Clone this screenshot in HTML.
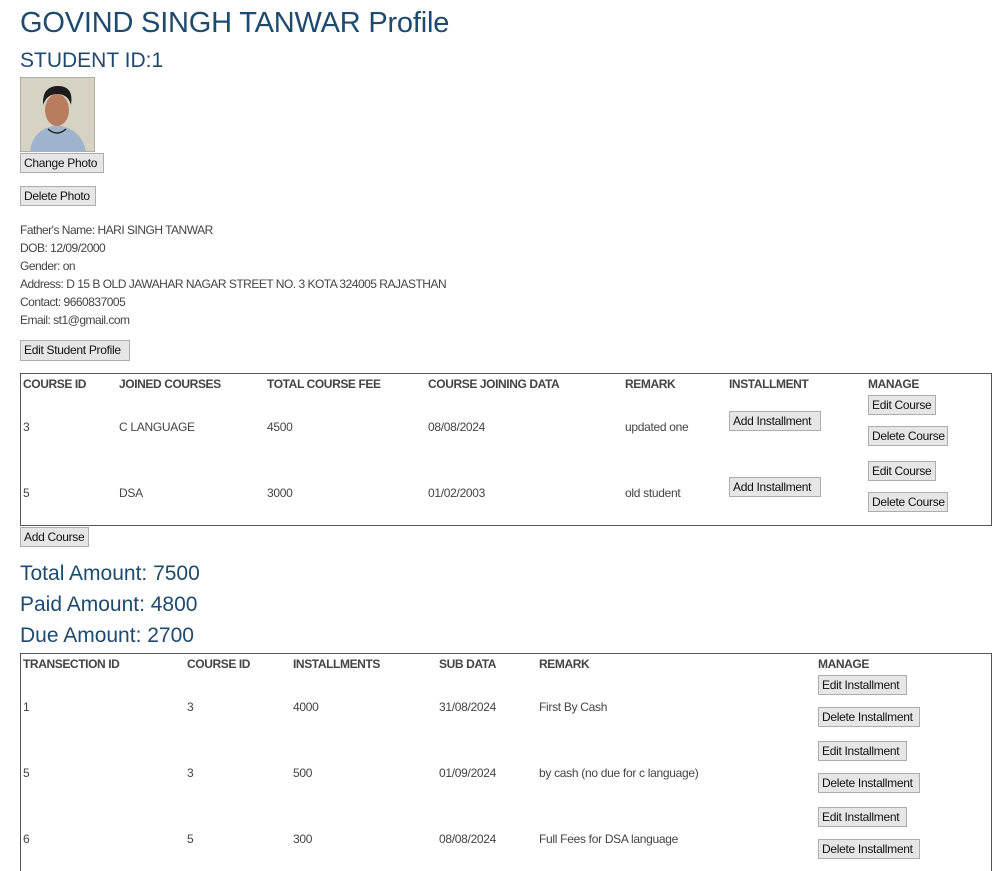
<!DOCTYPE html>
<html><head><meta charset="utf-8"><style>
html,body{margin:0;width:1002px;height:871px;overflow:hidden}
body{background:#fff;font-family:"Liberation Sans",sans-serif;color:#333;position:relative}
.a{position:absolute;white-space:nowrap}
.h{color:#1e4a6e}
.b{position:absolute;background:#e6e6e6;border:1px solid #adadad;box-sizing:border-box;font-size:12px;color:#111;height:20px;line-height:18px;padding:0 3px;white-space:nowrap;letter-spacing:-0.3px}
.t{font-size:12px;color:#444;letter-spacing:-0.3px}
.th{font-size:12px;font-weight:bold;color:#444;letter-spacing:-0.4px}
.box{position:absolute;border:1px solid #555;box-sizing:border-box}
</style></head><body>
<div class="a h" style="left:20px;top:7px;font-size:29px;letter-spacing:-0.2px">GOVIND SINGH TANWAR Profile</div>
<div class="a h" style="left:20px;top:49px;font-size:21px">STUDENT ID:1</div>
<svg class="a" style="left:20px;top:77px" width="75" height="75" viewBox="0 0 75 75">
<rect x="0" y="0" width="75" height="75" fill="#d6d3c4" stroke="#888"/>
<path d="M10 75 Q12 52 37 48 Q62 52 66 75Z" fill="#9fb4cc"/>
<ellipse cx="37" cy="33" rx="12" ry="16" fill="#b87c5e"/>
<path d="M23 28 Q22 9 38 9 Q54 9 51 28 Q48 17 37 17 Q27 17 23 28Z" fill="#1c1a1a"/>
<path d="M28 52 Q37 60 46 52" stroke="#222" fill="none" stroke-width="1.5"/>
</svg>
<div class="b" style="left:20px;top:153px;width:84px">Change Photo</div>
<div class="b" style="left:20px;top:186px;width:76px">Delete Photo</div>
<div class="a t" style="left:20px;top:221px;line-height:18px;font-size:12px;letter-spacing:-0.5px">Father's Name: HARI SINGH TANWAR<br>DOB: 12/09/2000<br>Gender: on<br>Address: D 15 B OLD JAWAHAR NAGAR STREET NO. 3 KOTA 324005 RAJASTHAN<br>Contact: 9660837005<br>Email: st1@gmail.com</div>
<div class="b" style="left:20px;top:340px;width:110px;height:21px">Edit Student Profile</div>

<div class="box" style="left:20px;top:373px;width:972px;height:153px"></div>
<div class="a th" style="left:23px;top:377px">COURSE ID</div>
<div class="a th" style="left:119px;top:377px">JOINED COURSES</div>
<div class="a th" style="left:267px;top:377px">TOTAL COURSE FEE</div>
<div class="a th" style="left:428px;top:377px">COURSE JOINING DATA</div>
<div class="a th" style="left:625px;top:377px">REMARK</div>
<div class="a th" style="left:729px;top:377px">INSTALLMENT</div>
<div class="a th" style="left:868px;top:377px">MANAGE</div>

<div class="a t" style="left:23px;top:420px">3</div>
<div class="a t" style="left:119px;top:420px">C LANGUAGE</div>
<div class="a t" style="left:267px;top:420px">4500</div>
<div class="a t" style="left:428px;top:420px">08/08/2024</div>
<div class="a t" style="left:625px;top:420px">updated one</div>
<div class="b" style="left:729px;top:411px;width:92px">Add Installment</div>
<div class="b" style="left:868px;top:395px;width:68px">Edit Course</div>
<div class="b" style="left:868px;top:426px;width:80px">Delete Course</div>

<div class="a t" style="left:23px;top:486px">5</div>
<div class="a t" style="left:119px;top:486px">DSA</div>
<div class="a t" style="left:267px;top:486px">3000</div>
<div class="a t" style="left:428px;top:486px">01/02/2003</div>
<div class="a t" style="left:625px;top:486px">old student</div>
<div class="b" style="left:729px;top:477px;width:92px">Add Installment</div>
<div class="b" style="left:868px;top:461px;width:68px">Edit Course</div>
<div class="b" style="left:868px;top:492px;width:80px">Delete Course</div>

<div class="b" style="left:20px;top:527px;width:69px">Add Course</div>

<div class="a h" style="left:20px;top:562px;font-size:21px">Total Amount: 7500</div>
<div class="a h" style="left:20px;top:593px;font-size:21px">Paid Amount: 4800</div>
<div class="a h" style="left:20px;top:624px;font-size:21px">Due Amount: 2700</div>

<div class="box" style="left:20px;top:653px;width:972px;height:240px"></div>
<div class="a th" style="left:23px;top:657px">TRANSECTION ID</div>
<div class="a th" style="left:187px;top:657px">COURSE ID</div>
<div class="a th" style="left:293px;top:657px">INSTALLMENTS</div>
<div class="a th" style="left:439px;top:657px">SUB DATA</div>
<div class="a th" style="left:539px;top:657px">REMARK</div>
<div class="a th" style="left:818px;top:657px">MANAGE</div>

<div class="a t" style="left:23px;top:700px">1</div>
<div class="a t" style="left:187px;top:700px">3</div>
<div class="a t" style="left:293px;top:700px">4000</div>
<div class="a t" style="left:439px;top:700px">31/08/2024</div>
<div class="a t" style="left:539px;top:700px">First By Cash</div>
<div class="b" style="left:818px;top:675px;width:89px">Edit Installment</div>
<div class="b" style="left:818px;top:707px;width:102px">Delete Installment</div>

<div class="a t" style="left:23px;top:766px">5</div>
<div class="a t" style="left:187px;top:766px">3</div>
<div class="a t" style="left:293px;top:766px">500</div>
<div class="a t" style="left:439px;top:766px">01/09/2024</div>
<div class="a t" style="left:539px;top:766px">by cash (no due for c language)</div>
<div class="b" style="left:818px;top:741px;width:89px">Edit Installment</div>
<div class="b" style="left:818px;top:773px;width:102px">Delete Installment</div>

<div class="a t" style="left:23px;top:832px">6</div>
<div class="a t" style="left:187px;top:832px">5</div>
<div class="a t" style="left:293px;top:832px">300</div>
<div class="a t" style="left:439px;top:832px">08/08/2024</div>
<div class="a t" style="left:539px;top:832px">Full Fees for DSA language</div>
<div class="b" style="left:818px;top:807px;width:89px">Edit Installment</div>
<div class="b" style="left:818px;top:839px;width:102px">Delete Installment</div>
</body></html>
